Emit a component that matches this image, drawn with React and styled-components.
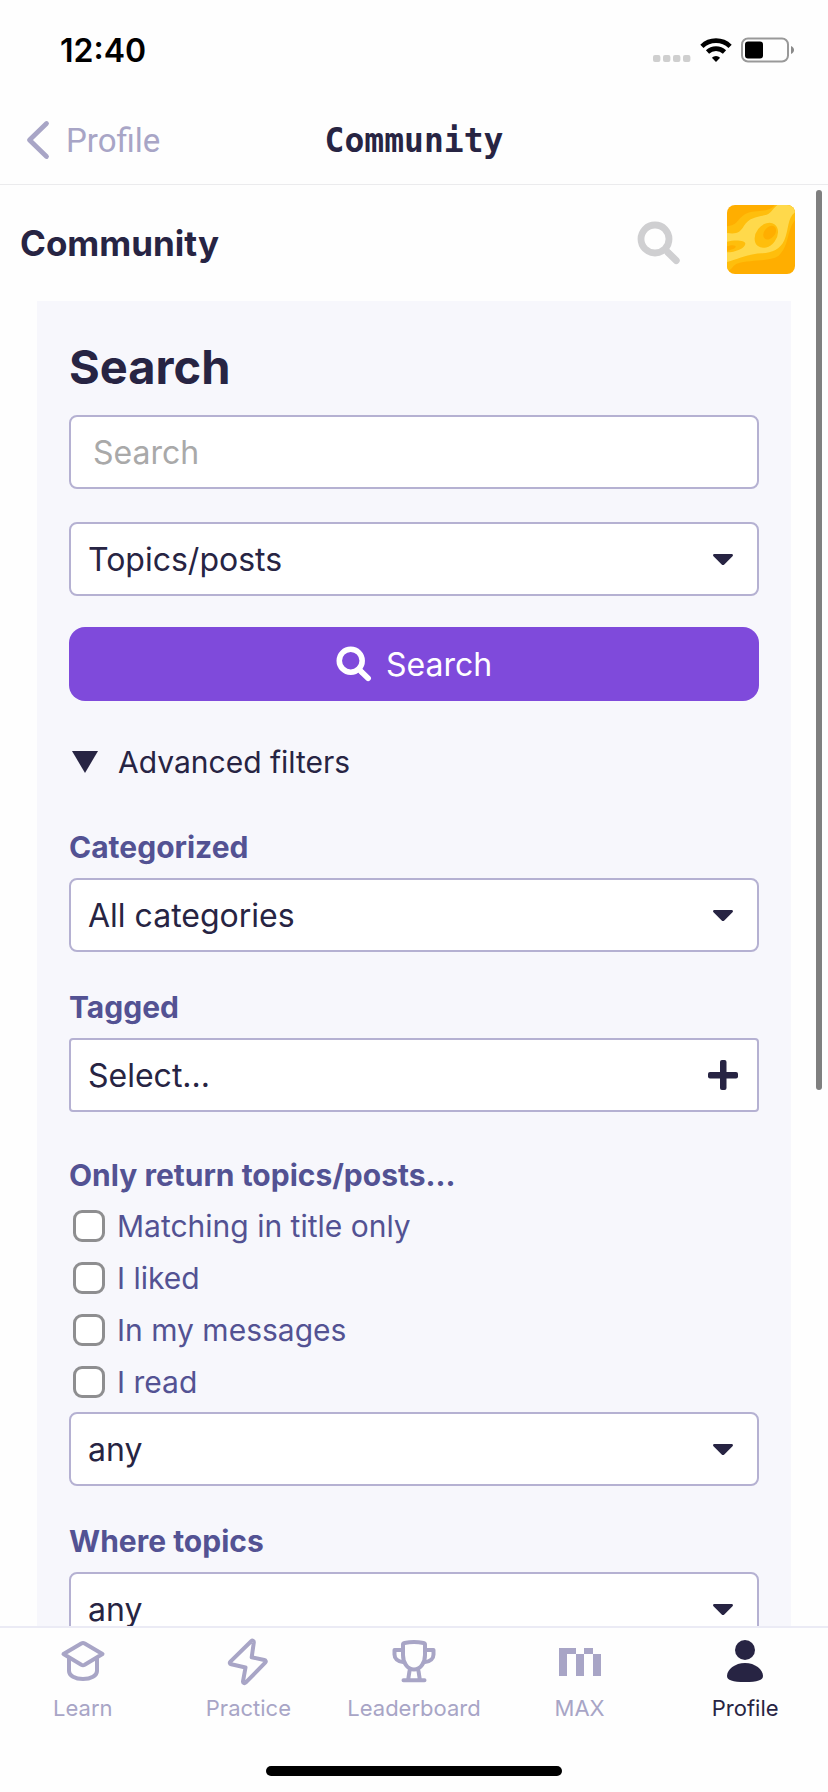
import React, { useState } from "react";
import styled, { createGlobalStyle } from "styled-components";

const GlobalStyle = createGlobalStyle`
  * {
    box-sizing: border-box;
  }

  body {
    margin: 0;
    background: #fefefe;
    color: #272443;
    font-family: Inter, "Liberation Sans", sans-serif;
    font-weight: 400;
  }

  button, input, select {
    font: inherit;
    color: inherit;
  }
`;

const Screen = styled.div`
  display: flex;
  flex-direction: column;
  height: 100vh;
  overflow: hidden;
`;

const StatusBar = styled.div`
  display: flex;
  justify-content: space-between;
  align-items: center;
  height: 100px;
  padding: 0 33px 0 60px;
  color: #000;
`;

const Clock = styled.span`
  font-size: 32px;
  font-weight: 600;
`;

const StatusIcons = styled.div`
  display: flex;
  align-items: center;
  gap: 9px;
`;

const NavBar = styled.header`
  display: grid;
  grid-template-columns: 1fr auto 1fr;
  align-items: center;
  height: 85px;
  padding: 0 26px 4px;
  border-bottom: 1px solid #ebebed;
`;

const BackLink = styled.a`
  display: flex;
  align-items: center;
  gap: 16px;
  color: #a8a5c6;
  font-family: Roboto, sans-serif;
  font-size: 33px;
  text-decoration: none;
`;

const NavTitle = styled.h1`
  margin: 0;
  font-family: "DejaVu Sans Mono", monospace;
  font-size: 33px;
  font-weight: 700;
`;

const Main = styled.main`
  position: relative;
  flex: 1;
  min-height: 0;
  overflow: hidden;
`;

const ScrollThumb = styled.div`
  position: absolute;
  top: 5px;
  right: 6px;
  width: 6px;
  height: 900px;
  border-radius: 3px;
  background: #7f7f7f;
`;

const TopBar = styled.div`
  display: flex;
  align-items: center;
  height: 116px;
  padding: 0 33px 0 20px;
`;

const SiteTitle = styled.a`
  flex: 1;
  color: inherit;
  font-size: 35px;
  font-weight: 700;
  text-decoration: none;
`;

const IconButton = styled.button`
  display: flex;
  padding: 0;
  border: 0;
  background: none;
  color: #cfcfd1;
  cursor: pointer;
`;

const AvatarLink = styled.a`
  display: flex;
  margin: 0 0 8px 46px;
  border-radius: 8px;
  overflow: hidden;
`;

const Panel = styled.form`
  display: flex;
  flex-direction: column;
  margin: 0 37px;
  padding: 36px 32px 32px;
  background: #f7f7fc;
`;

const Heading = styled.h2`
  margin: 0 0 18px;
  font-size: 47px;
  font-weight: 700;
  line-height: 60px;
`;

const SearchInput = styled.input`
  width: 100%;
  height: 74px;
  margin-bottom: 33px;
  padding: 0 22px;
  border: 2px solid #b5b1d2;
  border-radius: 8px;
  background: #fff;
  font-size: 32px;

  &::placeholder {
    color: #a9a9a9;
    opacity: 1;
  }
`;

const SelectWrap = styled.div`
  position: relative;

  > svg {
    position: absolute;
    top: 32px;
    right: 26px;
    pointer-events: none;
  }
`;

const SelectBox = styled.select`
  display: block;
  width: 100%;
  height: 74px;
  padding: 0 60px 0 17px;
  border: 2px solid #b5b1d2;
  border-radius: 8px;
  background: #fff;
  font-size: 32px;
  appearance: none;
`;

const TagPicker = styled.button`
  display: flex;
  justify-content: space-between;
  align-items: center;
  width: 100%;
  height: 74px;
  padding: 0 19px 0 17px;
  border: 2px solid #b5b1d2;
  border-radius: 4px;
  background: #fff;
  font-size: 32px;
  text-align: left;
`;

const SubmitButton = styled.button`
  display: flex;
  justify-content: center;
  align-items: center;
  gap: 14px;
  height: 74px;
  margin: 31px 0 41px;
  border: 0;
  border-radius: 16px;
  background: #7f4adb;
  color: #fff;
  font-size: 32px;
  cursor: pointer;
`;

const FilterToggle = styled.button`
  display: flex;
  align-items: center;
  gap: 20px;
  height: 40px;
  padding: 0 0 0 3px;
  border: 0;
  background: none;
  font-size: 30px;
  cursor: pointer;
`;

const Field = styled.div`
  margin-top: ${({ $gap }) => $gap || 35}px;
`;

const FieldLabel = styled.label`
  display: block;
  margin-bottom: 11px;
  color: #535293;
  font-size: 30px;
  font-weight: 700;
  line-height: 40px;
`;

const CheckGroup = styled.fieldset`
  margin: 43px 0 4px;
  padding: 0;
  border: 0;
`;

const Legend = styled.legend`
  margin-bottom: 5px;
  padding: 0;
  color: #535293;
  font-size: 30px;
  font-weight: 700;
  line-height: 40px;
`;

const CheckRow = styled.label`
  display: flex;
  align-items: center;
  gap: 12px;
  height: 52px;
  padding-left: 4px;
  color: #535293;
  font-size: 30px;
`;

const Checkbox = styled.input`
  width: 32px;
  height: 32px;
  margin: 0;
  border: 3px solid #8e8e90;
  border-radius: 9px;
  background: #fff;
  appearance: none;

  &:checked {
    background: #7f4adb;
  }
`;

const TabBar = styled.nav`
  display: grid;
  grid-template-columns: repeat(5, 1fr);
  padding-top: 10px;
  border-top: 2px solid #ebebf5;
`;

const Tab = styled.a`
  display: flex;
  flex-direction: column;
  align-items: center;
  gap: 8px;
  color: ${({ $active }) => ($active ? "#272443" : "#a8a5c6")};
  font-size: 22px;
  line-height: 28px;
  text-decoration: none;
`;

const HomeArea = styled.div`
  display: flex;
  justify-content: center;
  padding: 44px 0 16px;
`;

const HomeIndicator = styled.div`
  width: 296px;
  height: 10px;
  border-radius: 5px;
  background: #000;
`;

const SignalDots = () => (
  <svg width="38" height="26" viewBox="0 0 38 26" fill="#cfcfcf">
    {[0, 10, 20, 30].map((x) => (
      <rect key={x} x={x} y="18" width="7.4" height="7" rx="2" />
    ))}
  </svg>
);

const Wifi = () => (
  <svg width="32" height="26" viewBox="0 0 32 26" fill="none" stroke="#000" strokeWidth="4.6">
    <path d="M1.9 9.3a20.3 20.3 0 0 1 28.2 0" />
    <path d="M7.5 15a12.3 12.3 0 0 1 17 0" />
    <path d="M16 25l-4.1-4.2a5.8 5.8 0 0 1 8.2 0z" fill="#000" stroke="none" />
  </svg>
);

const Battery = () => (
  <svg width="54" height="26" viewBox="0 0 54 26">
    <rect x="1" y="1.5" width="46" height="23" rx="6" fill="none" stroke="#999" strokeWidth="2" />
    <rect x="4" y="4.5" width="18" height="17" rx="3" fill="#000" />
    <path d="M50 9c4 1.5 4 6.5 0 8z" fill="#8a8a8a" />
  </svg>
);

const Chevron = () => (
  <svg width="24" height="40" viewBox="0 0 24 40" fill="none" stroke="currentColor" strokeWidth="4.8" strokeLinecap="round" strokeLinejoin="round">
    <path d="M20.5 3.5L3.5 20l17 16.5" />
  </svg>
);

const Magnifier = ({ size }) => (
  <svg width={size} height={size} viewBox="0 0 44 44" fill="none" stroke="currentColor">
    <circle cx="18" cy="18" r="14" strokeWidth="6.8" />
    <path d="M31 31.5l8.2 8" strokeWidth="7" strokeLinecap="round" />
    <path d="M27.5 28l5 5" strokeWidth="6" />
  </svg>
);

const Caret = () => (
  <svg width="20" height="12" viewBox="0 0 20 12" fill="#272443">
    <path d="M1.4 0h17.2c1.3 0 1.8 1.4.9 2.3l-8.2 8.2c-.8.8-1.8.8-2.6 0L.5 2.3C-.4 1.4.1 0 1.400 0z" />
  </svg>
);

const Plus = () => (
  <svg width="30" height="30" viewBox="0 0 30 30" fill="#272443">
    <rect x="12" width="6.5" height="30" rx="2" />
    <rect y="12" width="30" height="6.5" rx="2" />
  </svg>
);

const Triangle = () => (
  <svg width="26" height="22" viewBox="0 0 26 22" fill="#272443">
    <path d="M0 0h26L13 22z" />
  </svg>
);

const Avatar = () => (
  <svg width="68" height="69" viewBox="0 0 204 207">
    <path fill="#ffae00" d="M0 0h204v207H0z" />
    <path
      fill="#ffbe0c"
      d="M0 64C34 60 30 42 55 27 85 11 125 26 143 0h61v45c-26 34-16 76-50 108-27 18-82 9-125 23-9 3-12 13-20 18l-9 4z"
    />
    <path
      fill="#ffd94b"
      d="M0 84c30 4 39-2 51-22 15-23 35-26 61-31 22-4 22-18 39-31h53v22c-24 18-18 53-32 84-13 28-36 37-67 39-43 2-69 16-105 26z"
    />
    <path fill="#ffbe0c" d="M0 110c22-6 55-5 55 6 0 13-31 26-55 26z" />
    <path fill="#ffae00" d="M0 124c14-6 28-4 26 2-3 7-16 8-26 12z" />
    <ellipse cx="118" cy="91" rx="31" ry="41" fill="#ffbe0c" transform="rotate(38 118 91)" />
    <ellipse cx="128" cy="83" rx="16" ry="23" fill="#ffae00" transform="rotate(40 128 83)" />
  </svg>
);

const TabIcon = ({ children }) => (
  <svg width="48" height="48" viewBox="0 0 48 48" fill="none" stroke="currentColor" strokeWidth="4" strokeLinecap="round" strokeLinejoin="round">
    {children}
  </svg>
);

const tabs = [
  {
    name: "Learn",
    icon: (
      <>
        <path d="M22.3 5.5q1.7-.9 3.4 0L43.5 16 25.7 26.7q-1.7.9-3.4 0L4.5 16z" />
        <path d="M10 20v13c0 4.5 6 8 14 8s14-3.5 14-8V20" />
      </>
    ),
  },
  {
    name: "Practice",
    icon: (
      <path d="M27.2 3.2c1.2-1.1 2.8-.4 2.6 1.3l-2.1 14.8 12.6 2.7c1.5.4 2 1.6.9 2.7L21.6 44.6c-1.2 1.1-2.8.4-2.6-1.3l2.5-13.8L7.3 26.3c-1.5-.4-2-1.6-.9-2.7z" />
    ),
  },
  {
    name: "Leaderboard",
    icon: (
      <>
        <path d="M13 6.5c0-1 .5-1.3 1.5-1.5 6-1.3 13-1.3 19 0 1 .2 1.5.5 1.5 1.5V17c0 7-4 14.5-11 14.5S13 24 13 17z" />
        <path d="M13 12H4.5v4.5c0 4 3 7 8.5 7.5M35 12h8.5v4.5c0 4-3 7-8.5 7.5" />
        <path d="M19.5 33l-1.3 8.5M28.5 33l1.3 8.5M13.5 42.2h21" />
      </>
    ),
  },
  {
    name: "MAX",
    icon: <path fill="currentColor" stroke="none" d="M3 10h17v6h8v-6h9v6h8v22h-8V16h-9v22h-8V16h-9v22H3z" />,
  },
  {
    name: "Profile",
    active: true,
    icon: (
      <g fill="currentColor" stroke="none">
        <circle cx="24" cy="12" r="10" />
        <path d="M24 25c10 0 18 6.5 18 13 0 4-5.5 6-18 6S6 42 6 38c0-6.5 8-13 18-13z" />
      </g>
    ),
  },
];

const filters = ["Matching in title only", "I liked", "In my messages", "I read"];

function Select({ options, ...rest }) {
  return (
    <SelectWrap>
      <SelectBox {...rest}>
        {options.map((o) => (
          <option key={o}>{o}</option>
        ))}
      </SelectBox>
      <Caret />
    </SelectWrap>
  );
}

export default function App() {
  const [open, setOpen] = useState(true);

  return (
    <Screen>
      <GlobalStyle />
      <StatusBar>
        <Clock>12:40</Clock>
        <StatusIcons>
          <SignalDots />
          <Wifi />
          <Battery />
        </StatusIcons>
      </StatusBar>

      <NavBar>
        <BackLink href="#profile">
          <Chevron />
          Profile
        </BackLink>
        <NavTitle>Community</NavTitle>
      </NavBar>

      <Main>
        <TopBar>
          <SiteTitle href="#community">Community</SiteTitle>
          <IconButton type="button" aria-label="Search">
            <Magnifier size={44} />
          </IconButton>
          <AvatarLink href="#account" aria-label="Account">
            <Avatar />
          </AvatarLink>
        </TopBar>

        <Panel onSubmit={(e) => e.preventDefault()}>
          <Heading>Search</Heading>
          <SearchInput type="text" placeholder="Search" aria-label="Search" />
          <Select aria-label="Search type" options={["Topics/posts", "Categories/tags", "Users"]} />
          <SubmitButton type="submit">
            <Magnifier size={36} />
            Search
          </SubmitButton>

          <FilterToggle type="button" aria-expanded={open} onClick={() => setOpen(!open)}>
            <Triangle />
            Advanced filters
          </FilterToggle>

          {open && (
            <>
              <Field $gap={45}>
                <FieldLabel htmlFor="category">Categorized</FieldLabel>
                <Select id="category" options={["All categories"]} />
              </Field>
              <Field>
                <FieldLabel htmlFor="tags">Tagged</FieldLabel>
                <TagPicker id="tags" type="button">
                  Select...
                  <Plus />
                </TagPicker>
              </Field>
              <CheckGroup>
                <Legend>Only return topics/posts...</Legend>
                {filters.map((name) => (
                  <CheckRow key={name}>
                    <Checkbox type="checkbox" />
                    {name}
                  </CheckRow>
                ))}
              </CheckGroup>
              <Select aria-label="Only return topics/posts" options={["any"]} />
              <Field>
                <FieldLabel htmlFor="where">Where topics</FieldLabel>
                <Select id="where" options={["any"]} />
              </Field>
            </>
          )}
        </Panel>
        <ScrollThumb />
      </Main>

      <TabBar>
        {tabs.map(({ name, icon, active }) => (
          <Tab key={name} href={`#${name.toLowerCase()}`} $active={active}>
            <TabIcon>{icon}</TabIcon>
            {name}
          </Tab>
        ))}
      </TabBar>
      <HomeArea>
        <HomeIndicator />
      </HomeArea>
    </Screen>
  );
}
